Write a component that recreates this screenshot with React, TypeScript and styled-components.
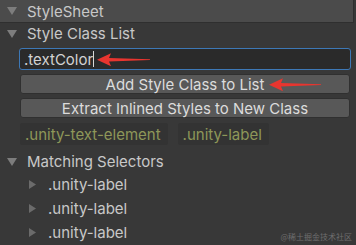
import styled, { createGlobalStyle } from 'styled-components';

const GlobalStyle = createGlobalStyle`
  html, body {
    margin: 0;
    padding: 0;
    background: #383838;
  }
  body {
    font-family: Inter, "Noto Sans", sans-serif;
    color: #c4c4c4;
  }
`;

function Arrow({ width }: { width: number }) {
  return (
    <ArrowSvg width={width} height={14} viewBox={`0 0 ${width} 14`}>
      <path
        d={`M0 7 L14 0.5 L12 5.2 L${width} 6.6 L${width} 7.4 L12 8.8 L14 13.5 Z`}
        fill="#e8352f"
      />
    </ArrowSvg>
  );
}

function Tri({ open }: { open: boolean }) {
  return open ? (
    <TriSvg width={10} height={8} viewBox="0 0 10 8">
      <path d="M0 0 H10 L5 8 Z" fill="#7d7d7d" />
    </TriSvg>
  ) : (
    <TriSvg width={7} height={9} viewBox="0 0 7 9">
      <path d="M0 0 L7 4.5 L0 9 Z" fill="#6b6b6b" />
    </TriSvg>
  );
}

export default function App() {
  const selectors = ['.unity-label', '.unity-label', '.unity-label'];
  return (
    <>
      <GlobalStyle />
      <Panel>
        <TopHeader>
          <Tri open />
          <span>StyleSheet</span>
        </TopHeader>
        <Foldout>
          <Tri open />
          <span>Style Class List</span>
        </Foldout>
        <Body>
          <InputRow>
            <Field>
              <span>.textColor</span>
              <Caret />
            </Field>
            <ArrowSlot left={78}>
              <Arrow width={53} />
            </ArrowSlot>
          </InputRow>
          <ButtonRow>
            <Button>Add Style Class to List</Button>
            <ArrowSlot left={250}>
              <Arrow width={52} />
            </ArrowSlot>
          </ButtonRow>
          <Button>Extract Inlined Styles to New Class</Button>
          <Tags>
            <Tag>.unity-text-element</Tag>
            <Tag>.unity-label</Tag>
          </Tags>
        </Body>
        <Foldout>
          <Tri open />
          <span>Matching Selectors</span>
        </Foldout>
        <List>
          {selectors.map((s, i) => (
            <Item key={i}>
              <Tri open={false} />
              <span>{s}</span>
            </Item>
          ))}
        </List>
        <Watermark>@稀土掘金技术社区</Watermark>
      </Panel>
    </>
  );
}

const Panel = styled.div`
  position: relative;
  width: 356px;
  height: 245px;
  overflow: hidden;
  background: #383838;
  font-size: 15px;
`;

const TopHeader = styled.div`
  display: flex;
  align-items: center;
  gap: 10px;
  height: 22px;
  width: 346px;
  padding-left: 7px;
  background: #4b4b4b;
  border-bottom: 1px solid #2f2f2f;
  border-right: 1px solid #2f2f2f;
  color: #c8c8c8;
`;

const Foldout = styled.div`
  display: flex;
  align-items: center;
  gap: 10px;
  height: 21px;
  padding-left: 7px;
  color: #c8c8c8;
`;

const TriSvg = styled.svg`
  display: block;
  flex: none;
`;

const Body = styled.div`
  display: flex;
  flex-direction: column;
  gap: 4px;
  padding: 4px 5px 6px 19px;
`;

const InputRow = styled.div`
  position: relative;
`;

const ButtonRow = styled.div`
  position: relative;
`;

const ArrowSlot = styled.div<{ left: number }>`
  position: absolute;
  left: ${(p) => p.left}px;
  top: 50%;
  transform: translateY(-45%);
  display: flex;
`;

const ArrowSvg = styled.svg`
  display: block;
`;

const Field = styled.div`
  display: flex;
  align-items: center;
  height: 20px;
  padding-left: 4px;
  background: #2a2a2a;
  border: 1px solid #3d78b6;
  border-radius: 3px;
  color: #d2d2d2;
`;

const Caret = styled.span`
  width: 1px;
  height: 16px;
  background: #d8d8d8;
`;

const Button = styled.div`
  display: flex;
  align-items: center;
  justify-content: center;
  height: 18px;
  margin-left: 1px;
  margin-right: 1px;
  background: #585858;
  border: 1px solid #303030;
  border-radius: 3px;
  color: #dcdcdc;
`;

const Tags = styled.div`
  display: flex;
  gap: 9px;
  padding-top: 1px;
`;

const Tag = styled.div`
  display: flex;
  align-items: center;
  height: 22px;
  padding: 0 7px 0 5px;
  margin-left: 1px;
  background: #333333;
  border-radius: 2px;
  color: #8e9759;
`;

const List = styled.div`
  display: flex;
  flex-direction: column;
`;

const Item = styled.div`
  display: flex;
  align-items: center;
  gap: 12px;
  height: 24px;
  padding-left: 29px;
  color: #c8c8c8;
`;

const Watermark = styled.div`
  position: absolute;
  right: 4px;
  bottom: 3px;
  font-family: "Noto Sans CJK SC", sans-serif;
  font-size: 8px;
  color: #6e6e6e;
`;
